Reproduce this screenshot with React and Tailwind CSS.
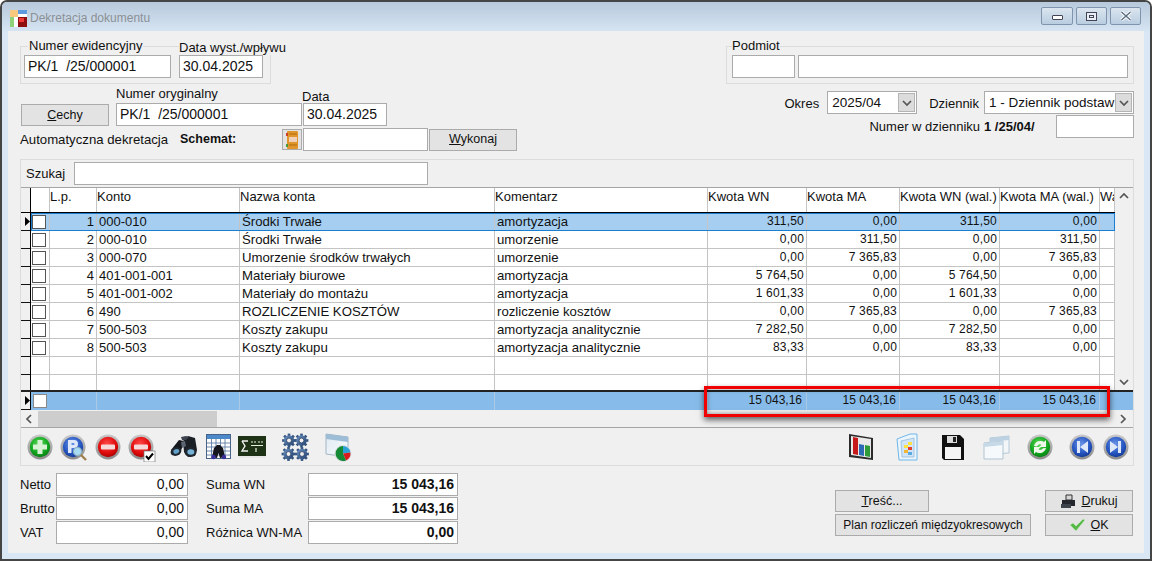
import React from "react";

const rows = [
  ["1", "000-010", "Środki Trwałe", "amortyzacja", "311,50", "0,00", "311,50", "0,00"],
  ["2", "000-010", "Środki Trwałe", "umorzenie", "0,00", "311,50", "0,00", "311,50"],
  ["3", "000-070", "Umorzenie środków trwałych", "umorzenie", "0,00", "7 365,83", "0,00", "7 365,83"],
  ["4", "401-001-001", "Materiały biurowe", "amortyzacja", "5 764,50", "0,00", "5 764,50", "0,00"],
  ["5", "401-001-002", "Materiały do montażu", "amortyzacja", "1 601,33", "0,00", "1 601,33", "0,00"],
  ["6", "490", "ROZLICZENIE KOSZTÓW", "rozliczenie kosztów", "0,00", "7 365,83", "0,00", "7 365,83"],
  ["7", "500-503", "Koszty zakupu", "amortyzacja analitycznie", "7 282,50", "0,00", "7 282,50", "0,00"],
  ["8", "500-503", "Koszty zakupu", "amortyzacja analitycznie", "83,33", "0,00", "83,33", "0,00"],
  ["", "", "", "", "", "", "", ""],
];

const cell = "h-full shrink-0 border-r border-[#c4c4c4] overflow-hidden whitespace-nowrap leading-[17px]";
const num = "pr-[2px] text-right text-[12px] tracking-[0.2px]";

function Input({ className = "", children, right, bold }) {
  return (
    <div className={`h-[23px] shrink-0 border border-[#ababab] bg-white text-[14px] leading-[21px] whitespace-pre overflow-hidden ${right ? "pr-[3px] text-right" : "pl-[3px]"} ${bold ? "font-bold" : ""} ${className}`}>
      {children}
    </div>
  );
}

function Btn({ className = "", children }) {
  return (
    <div className={`flex h-[22px] shrink-0 items-center justify-center gap-[5px] border border-[#ababab] bg-[#e3e3e3] text-[12.5px] whitespace-nowrap ${className}`}>
      {children}
    </div>
  );
}

function Chevron({ dir = "down", className = "" }) {
  const d = { down: "M2 4l4 4 4-4", up: "M2 8l4-4 4 4", left: "M8 2L4 6l4 4", right: "M4 2l4 4-4 4" }[dir];
  return (
    <svg width="12" height="12" viewBox="0 0 12 12" className={`shrink-0 ${className}`}>
      <path d={d} fill="none" stroke="#555" strokeWidth="1.7" />
    </svg>
  );
}

function Select({ className = "", children }) {
  return (
    <div className={`flex h-[23px] shrink-0 border border-[#ababab] bg-white text-[13.5px] leading-[22px] ${className}`}>
      <div className="min-w-0 flex-1 whitespace-pre pl-[4px]">{children}</div>
      <div className="m-px flex w-[17px] shrink-0 items-center justify-center border border-[#b4b4b4] bg-[#dcdcdc]">
        <Chevron />
      </div>
    </div>
  );
}

function Gradients() {
  const stops = (id, a, b, c) => (
    <radialGradient id={id} cx="45%" cy="35%" r="75%">
      <stop offset="0" stopColor={a} />
      <stop offset=".6" stopColor={b} />
      <stop offset="1" stopColor={c} />
    </radialGradient>
  );
  return (
    <svg width="0" height="0" className="absolute">
      <defs>
        {stops("gGreen", "#5fdc5a", "#11a51d", "#056b12")}
        {stops("gRed", "#ff4a4a", "#e00a0a", "#8f0000")}
        {stops("gBlue", "#6b94e8", "#2555c0", "#0f2f86")}
        <linearGradient id="gRing" x1="0" y1="0" x2="0" y2="1">
          <stop offset="0" stopColor="#c9c9c9" />
          <stop offset="1" stopColor="#8b8b8b" />
        </linearGradient>
        <linearGradient id="gWin" x1="0" y1="0" x2="1" y2="1">
          <stop offset="0" stopColor="#dfeaf2" />
          <stop offset="1" stopColor="#fafcfd" />
        </linearGradient>
        <linearGradient id="gGear" x1="0" y1="0" x2="1" y2="1">
          <stop offset="0" stopColor="#6c93c4" />
          <stop offset="1" stopColor="#24426f" />
        </linearGradient>
      </defs>
    </svg>
  );
}

function Orb({ fill, children, size = 26 }) {
  return (
    <svg width={size} height={size} viewBox="0 0 26 26" className="shrink-0">
      <circle cx="13" cy="13" r="12.5" fill="url(#gRing)" />
      <circle cx="13" cy="13" r="10.2" fill={`url(#${fill})`} />
      {children}
    </svg>
  );
}

const Plus = () => <Orb fill="gGreen"><path d="M10.500 6h5v4.500H20v5h-4.500V20h-5v-4.500H6v-5h4.500z" fill="#d9f2d5" /></Orb>;
const Minus = () => <Orb fill="gRed"><rect x="6" y="10.500" width="14" height="5" rx="1" fill="#f6dada" /></Orb>;

function PSearch() {
  return (
    <svg width="28" height="28" viewBox="0 0 28 28" className="shrink-0">
      <circle cx="13" cy="13" r="12.500" fill="url(#gRing)" />
      <circle cx="13" cy="13" r="10.200" fill="url(#gBlue)" />
      <path d="M8 6h6a4 4 0 010 8h-2.500v5H8zM11.500 9v2h2a1 1 0 000-2z" fill="#dfe8f8" fillRule="evenodd" />
      <path d="M20 20l6 6" stroke="#a08050" strokeWidth="2.400" />
      <circle cx="17.500" cy="17.500" r="4" fill="#a8dcf2" stroke="#8fb0c0" strokeWidth="1.200" />
    </svg>
  );
}

function MinusCheck() {
  return (
    <svg width="28" height="28" viewBox="0 0 28 28" className="shrink-0">
      <circle cx="13" cy="13" r="12.500" fill="url(#gRing)" />
      <circle cx="13" cy="13" r="10.200" fill="url(#gRed)" />
      <rect x="6" y="10.500" width="14" height="5" rx="1" fill="#f6dada" />
      <rect x="16" y="17" width="11" height="11" fill="#fff" stroke="#777" strokeWidth=".7" />
      <path d="M18 22l2.500 3 4.500-5.500" fill="none" stroke="#000" strokeWidth="2" />
    </svg>
  );
}

function Binoculars() {
  return (
    <svg width="28" height="24" viewBox="0 0 28 24" className="shrink-0">
      <path d="M1 15L9 5l5 1-2 7-3 7-5 0z" fill="#14171c" />
      <path d="M13 6l5-5 7 2 2 12-2 6-7 1-4-5z" fill="#1b1f26" />
      <path d="M11 7l4-1 1 5-4 2z" fill="#5c6672" />
      <path d="M11 2l5-1 3 1-3 3-4 0z" fill="#3d444e" />
      <ellipse cx="6" cy="16.500" rx="5.500" ry="4.200" fill="#20262e" transform="rotate(-20 6 16.500)" />
      <ellipse cx="6.300" cy="16.500" rx="3" ry="2.300" fill="#62a0c8" transform="rotate(-20 6 16.500)" />
      <ellipse cx="20.500" cy="17" rx="6" ry="5" fill="#20262e" />
      <ellipse cx="20.800" cy="17" rx="3.500" ry="2.800" fill="#76b2d6" />
    </svg>
  );
}

function TableBino() {
  return (
    <svg width="26" height="26" viewBox="0 0 26 26" className="shrink-0">
      <rect x=".5" y=".5" width="24" height="24" fill="#fdfdfd" stroke="#47638a" />
      <rect x="1" y="1" width="23" height="4" fill="#4d88c8" />
      <path d="M1 9h23M1 13h23M1 17h23M1 21h23M5.500 5v19M10 5v19M14.500 5v19M19 5v19" stroke="#5d7da6" strokeWidth=".9" />
      <path d="M6 23l2-9 3-3h3l3 3 2 9-5 1-1.500-5-1.500 5z" fill="#16161e" />
      <circle cx="7.500" cy="23" r="2.200" fill="#3a2d9c" />
      <circle cx="18" cy="23" r="2.200" fill="#3a2d9c" />
    </svg>
  );
}

function Sigma() {
  return (
    <svg width="29" height="24" viewBox="0 0 29 24" className="shrink-0">
      <rect x="0" y="1" width="28" height="20" fill="#1e3216" />
      <rect x="0" y="21" width="28" height="2" fill="#e7e7e7" />
      <path d="M4 6h6M4 6l3 5-3 5h6" fill="none" stroke="#f2f2f2" strokeWidth="1.400" />
      <path d="M13 7h2M16 7h2M20 7h2M23 7h2M13 10.500h12M18 13v4" stroke="#e8eee2" strokeWidth="1.200" />
    </svg>
  );
}

function Gear({ x, y, r = 5.200 }) {
  const teeth = [0, 45, 90, 135, 180, 225, 270, 315];
  return (
    <g transform={`translate(${x} ${y})`}>
      {teeth.map((a) => (
        <rect key={a} x={-1.300} y={-r - 1.700} width={2.600} height={3.400} fill="#34557f" transform={`rotate(${a})`} />
      ))}
      <circle r={r} fill="url(#gGear)" />
      <circle r={r - 2.800} fill="#f0f0f0" stroke="#1e3558" strokeWidth=".7" />
    </g>
  );
}

function Gears() {
  return (
    <svg width="29" height="29" viewBox="0 0 29 29" className="shrink-0">
      <Gear x={8} y={7.500} />
      <Gear x={20.500} y={7.500} />
      <Gear x={7.500} y={21} />
      <Gear x={21} y={21} />
    </svg>
  );
}

function WinPie() {
  return (
    <svg width="27" height="29" viewBox="0 0 27 29" className="shrink-0">
      <path d="M1 1l22 3v20L1 21z" fill="url(#gWin)" stroke="#a2b6c6" />
      <path d="M1 1l22 3v5L1 6z" fill="#9dbdd6" />
      <circle cx="18" cy="20.500" r="8.500" fill="#d9dfe3" />
      <path d="M18 20.500V13a7.500 7.500 0 017.400 6.500z" fill="#2aa2d6" />
      <path d="M18 20.500l7.400-1a7.500 7.500 0 01-4.400 7.900z" fill="#d81c1c" />
      <path d="M18 20.500l3 6.900a7.500 7.500 0 01-10.400-6.900A7.500 7.500 0 0118 13z" fill="#158a35" />
    </svg>
  );
}

function BarChart() {
  return (
    <svg width="27" height="28" viewBox="0 0 27 28" className="shrink-0">
      <path d="M0 1l24 4v22L0 24z" fill="#2b2b2b" />
      <path d="M2 3l20 3v19L2 22z" fill="#e9e9e9" />
      <path d="M4 4l5 1v17l-5-1z" fill="#c61a1a" />
      <path d="M10 11l5 1v11l-5-1z" fill="#2d6cb5" />
      <path d="M16 12l5 1v11l-5-1z" fill="#2f9a3a" />
    </svg>
  );
}

function DocGrid() {
  return (
    <svg width="22" height="28" viewBox="0 0 22 28" className="shrink-0">
      <path d="M1 6l13-5h7v26H3z" fill="#eaf5fd" stroke="#6fb7e8" />
      <path d="M5 8l13-3v19H6z" fill="#cfe4f6" stroke="#7fa9cf" strokeWidth=".6" />
      <rect x="8" y="12" width="4" height="3" fill="#ffe23d" />
      <rect x="12" y="9" width="4" height="3" fill="#ffe23d" />
      <rect x="12" y="14" width="4" height="3" fill="#e4402d" />
      <rect x="8" y="17" width="4" height="3" fill="#f2b431" />
      <rect x="12" y="19" width="4" height="3" fill="#5aa9e0" />
    </svg>
  );
}

function Floppy() {
  return (
    <svg width="24" height="27" viewBox="0 0 24 27" className="shrink-0">
      <path d="M1 1h18l4 4v21H3l-2-2z" fill="#111" />
      <rect x="6" y="2" width="10" height="7" fill="#dcdcdc" />
      <rect x="12" y="3" width="3" height="5" fill="#222" />
      <rect x="4" y="13" width="16" height="12" fill="#f4f4f4" />
    </svg>
  );
}

function Windows() {
  return (
    <svg width="27" height="27" viewBox="0 0 27 27" className="shrink-0">
      <path d="M7 4l19-2v17L7 20z" fill="#f2f6f9" stroke="#b6c8d5" />
      <path d="M7 4l19-2v4L7 8z" fill="#bcd2e2" />
      <path d="M1 9l19-2v18H1z" fill="#f6f9fb" stroke="#b0c4d2" />
      <path d="M1 9l19-2v4L1 13z" fill="#c6d9e6" />
    </svg>
  );
}

function Refresh() {
  return (
    <Orb fill="gGreen">
      <path d="M7 12a6.500 6.500 0 0110-4l2-2v7h-7l2.500-2.300A3.500 3.500 0 0010 12.500z" fill="#eef7ea" />
      <path d="M19 14a6.500 6.500 0 01-10 4l-2 2v-7h7l-2.500 2.300a3.500 3.500 0 004.500-1z" fill="#eef7ea" />
    </Orb>
  );
}

const Rewind = () => (
  <Orb fill="gBlue"><path d="M8 7h3v12H8zM19 7v12l-8-6z" fill="#dfe8f8" /></Orb>
);
const Forward = () => (
  <Orb fill="gBlue"><path d="M18 7h-3v12h3zM7 7v12l8-6z" fill="#dfe8f8" /></Orb>
);

function Logo() {
  return (
    <svg width="17" height="17" viewBox="0 0 17 17" className="shrink-0">
      <rect x="0" y="0" width="17" height="17" fill="#fff" />
      <rect x="0" y="0" width="8" height="7" fill="#f9c87e" />
      <rect x="8" y="0" width="9" height="4" fill="#5f9be0" />
      <rect x="0" y="7" width="4" height="10" fill="#8fd27a" />
      <rect x="8" y="7" width="9" height="10" fill="#8e0f0f" />
      <rect x="9" y="8" width="5" height="4" fill="#ef3a3a" />
    </svg>
  );
}

function Notebook() {
  return (
    <svg width="14" height="18" viewBox="0 0 14 18">
      <rect x="2" y="0" width="11" height="18" rx="1" fill="#e0962a" />
      <rect x="4" y="6" width="8" height="5" fill="#f0d0b8" />
      <path d="M4 3h8M4 14h8" stroke="#b06a10" />
      <path d="M2 2v3" stroke="#c8402a" strokeWidth="2" />
      <path d="M2 13v3" stroke="#4a9a40" strokeWidth="2" />
    </svg>
  );
}

function Printer() {
  return (
    <svg width="16" height="14" viewBox="0 0 16 14" className="shrink-0">
      <path d="M6 1h6v5H6z" fill="#d6d6d6" stroke="#333" />
      <path d="M2 6h13v6H2z" fill="#23272d" />
      <path d="M1 10h10v4H1z" fill="#3d434b" />
    </svg>
  );
}

function Check() {
  return (
    <svg width="16" height="14" viewBox="0 0 16 14" className="shrink-0">
      <path d="M1 7l3-2 3 3 7-7 2 1-9 11z" fill="#56b948" stroke="#cfe8c8" strokeWidth=".6" />
    </svg>
  );
}

function WinBtn({ w, children }) {
  return (
    <div className={`flex h-[18px] items-center justify-center rounded-[2px] border border-[#7f95ad] bg-gradient-to-b from-[#dbe5ef] to-[#b9cde0] ${w}`}>
      {children}
    </div>
  );
}

function Box({ on, sel }) {
  return <div className={`h-[14px] w-[14px] border ${on ? "border-[#888] bg-white" : "border-[#555] bg-white"} ${sel || ""}`} />;
}

function Arrow() {
  return (
    <svg width="5" height="9" viewBox="0 0 5 9" className="ml-auto">
      <path d="M0 0l5 4.500L0 9z" fill="#000" />
    </svg>
  );
}

export default function App() {
  return (
    <div className="relative h-[561px] w-[1152px] overflow-hidden rounded-t-[7px] border-2 border-[#454545] bg-[#d9e6f3] font-['Liberation_Sans',Arial,sans-serif] text-[13px] text-[#111]">
      <Gradients />
      {/* Title bar */}
      <div className="flex h-[29px] items-center bg-gradient-to-b from-[#b7c9dc] to-[#d6e4f2] pl-[8px] pr-[9px] pt-[3px]">
        <Logo />
        <span className="ml-[3px] text-[12px] text-[#8b9095]">Dekretacja dokumentu</span>
        <div className="mb-[4px] ml-auto flex gap-[3px]">
          <WinBtn w="w-[32px]"><div className="mt-[2px] h-[5px] w-[11px] rounded-[1px] border border-[#445] bg-white" /></WinBtn>
          <WinBtn w="w-[31px]"><div className="flex h-[9px] w-[11px] items-center justify-center border border-[#445] bg-[#e7eef5]"><div className="h-[3px] w-[5px] border border-[#445]" /></div></WinBtn>
          <WinBtn w="w-[31px]"><svg width="12" height="10" viewBox="0 0 12 10"><path d="M1.500 1l9 8M10.500 1l-9 8" stroke="#fff" strokeWidth="3.200" /><path d="M1.500 1l9 8M10.500 1l-9 8" stroke="#5d6d80" strokeWidth="1.400" /></svg></WinBtn>
        </div>
      </div>

      {/* Client area */}
      <div className="mx-[6px] flex h-[522px] flex-col bg-[#f0f0f0]">
        {/* Top form */}
        <div className="flex h-[128px] shrink-0 justify-between pl-[12px] pr-[10px]">
          <div className="w-[497px]">
            <div className="mt-[15px] h-[38px] w-[251px] border border-[#dcdcdc]">
              <div className="-mt-[8px] flex pl-[3px]">
                <div className="w-[147px]">
                  <div className="ml-[4px] h-[16px] w-fit bg-[#f0f0f0] px-px leading-[14px] whitespace-nowrap">Numer ewidencyjny</div>
                  <Input className="w-[147px]">PK/1  /25/000001</Input>
                </div>
                <div className="ml-[8px]">
                  <div className="h-[16px] w-[108px] bg-[#f0f0f0] pt-[2px] text-[13px] leading-[14px] whitespace-nowrap">Data wyst./wpływu</div>
                  <Input className="w-[84px]">30.04.2025</Input>
                </div>
              </div>
            </div>
            <div className="mt-[3px] flex items-end">
              <Btn className="ml-px w-[88px]"><span><u>C</u>echy</span></Btn>
              <div className="ml-[7px]">
                <div className="h-[16px] leading-[14px] whitespace-nowrap">Numer oryginalny</div>
                <Input className="w-[186px]">PK/1  /25/000001</Input>
              </div>
              <div className="ml-px">
                <div className="-ml-px h-[16px] pt-[3px] leading-[14px]">Data</div>
                <Input className="w-[84px]">30.04.2025</Input>
              </div>
            </div>
            <div className="mt-[2px] flex h-[23px] items-center">
              <span className="w-[160px] text-[13.2px] whitespace-nowrap">Automatyczna dekretacja</span>
              <span className="w-[102px] text-[12.5px] font-bold">Schemat:</span>
              <div className="flex h-[21px] w-[20px] items-center justify-center border border-[#ababab] bg-[#e3e3e3]"><Notebook /></div>
              <Input className="ml-px w-[125px]" />
              <Btn className="ml-px w-[88px]"><span><u>W</u>ykonaj</span></Btn>
            </div>
          </div>
          <div className="w-[408px]">
            <div className="mt-[15px] h-[38px] border border-[#dcdcdc]">
              <div className="-mt-[8px] pl-[5px]">
                <div className="h-[16px] w-fit bg-[#f0f0f0] leading-[14px]">Podmiot</div>
                <div className="flex gap-[3px]">
                  <Input className="w-[63px]" />
                  <Input className="w-[330px]" />
                </div>
              </div>
            </div>
            <div className="mt-[7px] flex items-start justify-end">
              <span className="mt-[3px] mr-[8px] text-[13px]">Okres</span>
              <Select className="w-[90px]">2025/04</Select>
              <span className="mt-[3px] mr-[5px] ml-[12px]">Dziennik</span>
              <Select className="w-[150px]">1 - Dziennik podstaw</Select>
            </div>
            <div className="mt-px flex items-center justify-end">
              <span>Numer w dzienniku</span>
              <span className="ml-[4px] w-[72px] font-bold">1 /25/04/</span>
              <Input className="w-[78px]" />
            </div>
          </div>
        </div>

        {/* Grid panel */}
        <div className="ml-[12px] mr-[10px] h-[307px] shrink-0 border border-[#dcdcdc]">
          <div className="flex items-center pl-[5px] pt-[2px]">
            <span className="w-[48px]">Szukaj</span>
            <Input className="w-[354px]" />
          </div>
          <div className="mt-[2px] border-t border-[#a5a5a5]">
            <div className="flex">
              <div className="h-[202px] w-[1094px] shrink-0 bg-white text-[13px]">
                <div className="flex h-[25px] border-b border-black">
                  <div className="h-full w-[10px] shrink-0 border-r border-black bg-[#f0f0f0]" />
                  <div className={`${cell} w-[19px]`} />
                  <div className={`${cell} w-[47px]`}>L.p.</div>
                  <div className={`${cell} w-[143px]`}>Konto</div>
                  <div className={`${cell} w-[255px]`}>Nazwa konta</div>
                  <div className={`${cell} w-[213px]`}>Komentarz</div>
                  <div className={`${cell} w-[99px]`}>Kwota WN</div>
                  <div className={`${cell} w-[93px]`}>Kwota MA</div>
                  <div className={`${cell} w-[100px]`}>Kwota WN (wal.)</div>
                  <div className={`${cell} w-[100px]`}>Kwota MA (wal.)</div>
                  <div className={`${cell} w-[15px] text-clip`}>Wa</div>
                </div>
                {rows.map((r, i) => (
                  <div key={i} className="flex h-[18px]">
                    <div className="flex h-full w-[10px] shrink-0 items-center border-r border-b border-r-black border-b-[#111] bg-[#f0f0f0]">
                      {i === 0 && <Arrow />}
                    </div>
                    <div className={`flex flex-1 border-b border-[#c4c4c4] ${i === 0 ? "bg-[#a6cef0] outline -outline-offset-1 outline-[#1b7fd1]" : ""}`}>
                      <div className="flex h-full w-[19px] shrink-0 items-center border-r border-[#c4c4c4] pl-px">
                        {r[0] && <Box sel={i === 0 ? "border-[#1b7fd1]" : ""} />}
                      </div>
                      <div className={`${cell} w-[47px] pr-[2px] text-right`}>{r[0]}</div>
                      <div className={`${cell} w-[143px] pl-[2px]`}>{r[1]}</div>
                      <div className={`${cell} w-[255px] pl-[2px] text-[13.2px]`}>{r[2]}</div>
                      <div className={`${cell} w-[213px] pl-[2px] text-[13.2px]`}>{r[3]}</div>
                      <div className={`${cell} w-[99px] ${num}`}>{r[4]}</div>
                      <div className={`${cell} w-[93px] ${num}`}>{r[5]}</div>
                      <div className={`${cell} w-[100px] ${num}`}>{r[6]}</div>
                      <div className={`${cell} w-[100px] ${num}`}>{r[7]}</div>
                      <div className={`${cell} w-[15px]`} />
                    </div>
                  </div>
                ))}
                <div className="flex h-[15px]">
                  <div className="h-full w-[10px] shrink-0 border-r border-black bg-[#f0f0f0]" />
                  <div className={`${cell} w-[19px]`} />
                  <div className={`${cell} w-[47px]`} />
                  <div className={`${cell} w-[143px]`} />
                  <div className={`${cell} w-[255px]`} />
                  <div className={`${cell} w-[213px]`} />
                  <div className={`${cell} w-[99px]`} />
                  <div className={`${cell} w-[93px]`} />
                  <div className={`${cell} w-[100px]`} />
                  <div className={`${cell} w-[100px]`} />
                  <div className={`${cell} w-[15px]`} />
                </div>
              </div>
              <div className="flex h-[202px] flex-1 flex-col items-center justify-between bg-[#f0f0f0] pt-[2px] pb-[2px]">
                <Chevron dir="up" />
                <Chevron dir="down" />
              </div>
            </div>
            <div className="flex h-[20px] border-t-2 border-[#222] bg-[#87bcea] text-[12px] leading-[16px]">
              <div className="flex h-full w-[10px] shrink-0 items-center border-r border-b border-r-black border-b-[#111] bg-[#f0f0f0]"><Arrow /></div>
              <div className="flex h-full w-[19px] shrink-0 items-center pl-[2px]"><Box on /></div>
              <div className="h-full w-[47px] shrink-0 border-r border-[#a9c9e6]" />
              <div className="h-full w-[143px] shrink-0 border-r border-[#a9c9e6]" />
              <div className="h-full w-[255px] shrink-0 border-r border-[#a9c9e6]" />
              <div className="h-full w-[213px] shrink-0 border-r border-[#a9c9e6]" />
              <div className="h-full w-[99px] shrink-0 border-r border-[#a9c9e6] pr-[4px] text-right">15 043,16</div>
              <div className="h-full w-[93px] shrink-0 border-r border-[#a9c9e6] pr-[3px] text-right">15 043,16</div>
              <div className="h-full w-[100px] shrink-0 border-r border-[#a9c9e6] pr-[3px] text-right">15 043,16</div>
              <div className="h-full w-[100px] shrink-0 border-r border-[#a9c9e6] pr-[3px] text-right">15 043,16</div>
            </div>
            <div className="flex h-[18px] items-center border-b border-[#a5a5a5] bg-[#f0f0f0] pl-[2px] pr-[4px]">
              <Chevron dir="left" />
              <div className="ml-[3px] h-[16px] w-[179px] bg-[#cdcdcd]" />
              <Chevron dir="right" className="ml-auto" />
            </div>
            {/* Toolbar */}
            <div className="flex h-[38px] items-center">
              <div className="ml-[6px]"><Plus /></div>
              <div className="ml-[7px] mt-[2px]"><PSearch /></div>
              <div className="ml-[7px]"><Minus /></div>
              <div className="ml-[7px] mt-[2px]"><MinusCheck /></div>
              <div className="ml-[14px]"><Binoculars /></div>
              <div className="ml-[8px]"><TableBino /></div>
              <div className="ml-[6px]"><Sigma /></div>
              <div className="ml-[14px]"><Gears /></div>
              <div className="ml-[15px]"><WinPie /></div>
              <div className="ml-auto"><BarChart /></div>
              <div className="ml-[20px]"><DocGrid /></div>
              <div className="ml-[23px]"><Floppy /></div>
              <div className="ml-[18px]"><Windows /></div>
              <div className="ml-[17px]"><Refresh /></div>
              <div className="ml-[16px]"><Rewind /></div>
              <div className="ml-[8px] mr-[4px]"><Forward /></div>
            </div>
          </div>
        </div>

        {/* Bottom */}
        <div className="flex flex-1 items-start justify-between pl-[12px] pr-[11px] pt-[7px]">
          <div className="flex gap-[18px]">
            <div className="flex flex-col gap-px">
              {["Netto", "Brutto", "VAT"].map((l) => (
                <div key={l} className="flex items-center">
                  <span className="w-[36px]">{l}</span>
                  <Input right className="w-[132px]">0,00</Input>
                </div>
              ))}
            </div>
            <div className="flex flex-col gap-px">
              {[["Suma WN", "15 043,16"], ["Suma MA", "15 043,16"], ["Różnica WN-MA", "0,00"]].map(([l, v]) => (
                <div key={l} className="flex items-center">
                  <span className="w-[102px] whitespace-nowrap">{l}</span>
                  <Input right bold className="w-[150px]">{v}</Input>
                </div>
              ))}
            </div>
          </div>
          <div className="mt-[17px] flex gap-[14px]">
            <div className="flex flex-col gap-[2px]">
              <Btn className="w-[94px]"><span><u>T</u>reść...</span></Btn>
              <Btn className="w-[196px] text-[12px]">Plan rozliczeń międzyokresowych</Btn>
            </div>
            <div className="flex flex-col gap-[2px]">
              <Btn className="w-[88px]"><Printer /><span><u>D</u>rukuj</span></Btn>
              <Btn className="w-[88px]"><Check /><span><u>O</u>K</span></Btn>
            </div>
          </div>
        </div>
      </div>

      {/* Highlight annotation */}
      <div className="absolute left-[702px] top-[384px] h-[31px] w-[406px] border-[3.500px] border-[#f00000] shadow-[0_3px_6px_rgba(0,0,0,0.6),inset_0_0_5px_rgba(0,0,0,0.45)]" />
    </div>
  );
}
